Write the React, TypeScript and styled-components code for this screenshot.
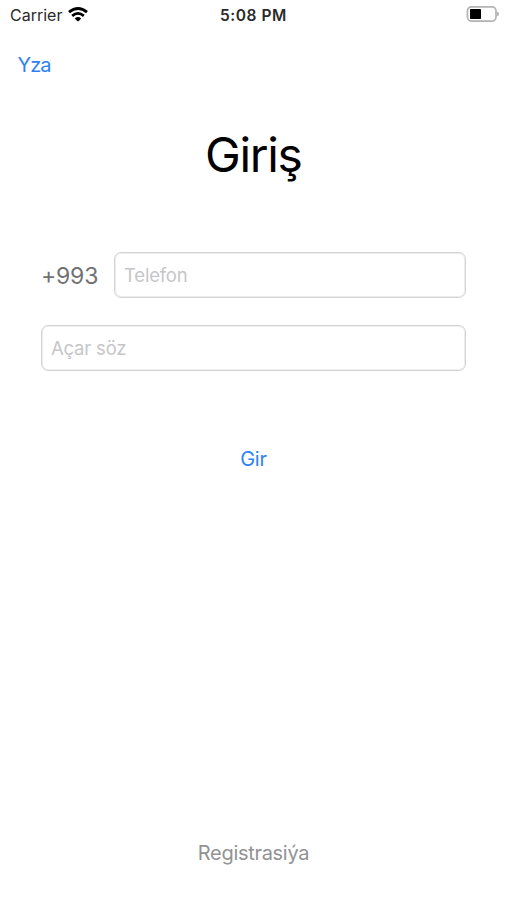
import React from "react";
import styled, { createGlobalStyle } from "styled-components";

const GlobalStyle = createGlobalStyle`
  * { box-sizing: border-box; }
  body { margin: 0; background: #fff; font-family: Inter, sans-serif; overflow: hidden; }
`;

const Screen = styled.main`
  width: 507px;
  height: 900px;
  display: flex;
  flex-direction: column;
  background: #fff;
`;

const StatusBar = styled.header`
  height: 30px;
  display: grid;
  grid-template-columns: 1fr auto 1fr;
  align-items: center;
  padding: 0 8px 0 10px;
  color: #2a2a2a;
`;

const Carrier = styled.div`
  display: flex;
  align-items: center;
  gap: 6px;
  font-size: 16px;
  line-height: 30px;
`;

const Wifi = styled.svg`
  margin-bottom: 1px;
`;

const Clock = styled.time`
  margin-right: 2px;
  padding-top: 2px;
  font-size: 15.5px;
  font-weight: 600;
  line-height: 28px;
  letter-spacing: 0.55px;
`;

const Battery = styled.svg`
  justify-self: end;
  margin-bottom: 2px;
`;

const LinkButton = styled.button<{ $color?: string; $spacing?: number }>`
  border: 0;
  padding: 0;
  background: none;
  font-family: inherit;
  font-size: 20px;
  line-height: 26px;
  letter-spacing: ${(p) => p.$spacing ?? 0}px;
  color: ${(p) => p.$color ?? "#2c82f2"};
`;

const NavBar = styled.nav`
  height: 70px;
  padding: 22px 17.5px;
`;

const Title = styled.h1`
  margin: 25px 0 0;
  height: 60px;
  text-align: center;
  font-size: 48px;
  font-weight: 400;
  line-height: 60px;
  letter-spacing: -1.3px;
  text-indent: -0.5px;
  color: #000;
`;

const Form = styled.form`
  display: flex;
  flex-direction: column;
  padding: 67px 41px 0;
  gap: 27px;
`;

const Row = styled.div`
  display: flex;
  align-items: center;
`;

const Prefix = styled.span`
  width: 73px;
  padding-top: 1px;
  font-size: 23px;
  letter-spacing: -0.2px;
  color: #717174;
`;

const Field = styled.input`
  flex: 1;
  min-width: 0;
  height: 46px;
  padding: 0 9px;
  border: 1px solid #d4d4d4;
  border-radius: 7px;
  box-shadow: inset 0 0 0 1px #ececec;
  background: #fff;
  font-family: inherit;
  font-size: 18.5px;
  letter-spacing: -0.2px;
  outline: none;
  &::placeholder { color: #c6c6c8; opacity: 1; }
`;

const Actions = styled.div`
  display: flex;
  justify-content: center;
  padding-top: 48px;
`;

const Footer = styled.footer`
  margin-top: auto;
  height: 60px;
  display: flex;
  justify-content: center;
  align-items: flex-start;
`;

export default function App() {
  return (
    <>
      <GlobalStyle />
      <Screen>
        <StatusBar>
          <Carrier>
            Carrier
            <Wifi width="20" height="15" viewBox="0 0 20 15" fill="none" stroke="#000" strokeWidth="2.8">
              <path d="M1 5.2Q10-2.2 19 5.2M4.2 8.8Q10 4 15.8 8.8" />
              <path d="M6.8 11.4Q10 8.8 13.2 11.4L10.8 13.9Q10 14.6 9.2 13.9Z" fill="#000" stroke="none" />
            </Wifi>
          </Carrier>
          <Clock>5:08 PM</Clock>
          <Battery width="33" height="16" viewBox="0 0 33 16">
            <rect x="1.4" y="0.9" width="28.6" height="14.2" rx="4" fill="#fff" stroke="#b3b3b3" strokeWidth="1.7" />
            <rect x="4" y="3" width="11" height="10" rx="0.8" fill="#000" />
            <path d="M31 5.7Q33 6.2 33 8T31 10.3Z" fill="#b3b3b3" />
          </Battery>
        </StatusBar>
        <NavBar><LinkButton $spacing={-0.9}>Yza</LinkButton></NavBar>
        <Title>Giriş</Title>
        <Form>
          <Row><Prefix>+993</Prefix><Field type="tel" placeholder="Telefon" /></Row>
          <Row><Field type="password" placeholder="Açar söz" /></Row>
          <Actions><LinkButton type="button" $spacing={-0.2}>Gir</LinkButton></Actions>
        </Form>
        <Footer><LinkButton $color="#929294" $spacing={-0.3}>Registrasiýa</LinkButton></Footer>
      </Screen>
    </>
  );
}
